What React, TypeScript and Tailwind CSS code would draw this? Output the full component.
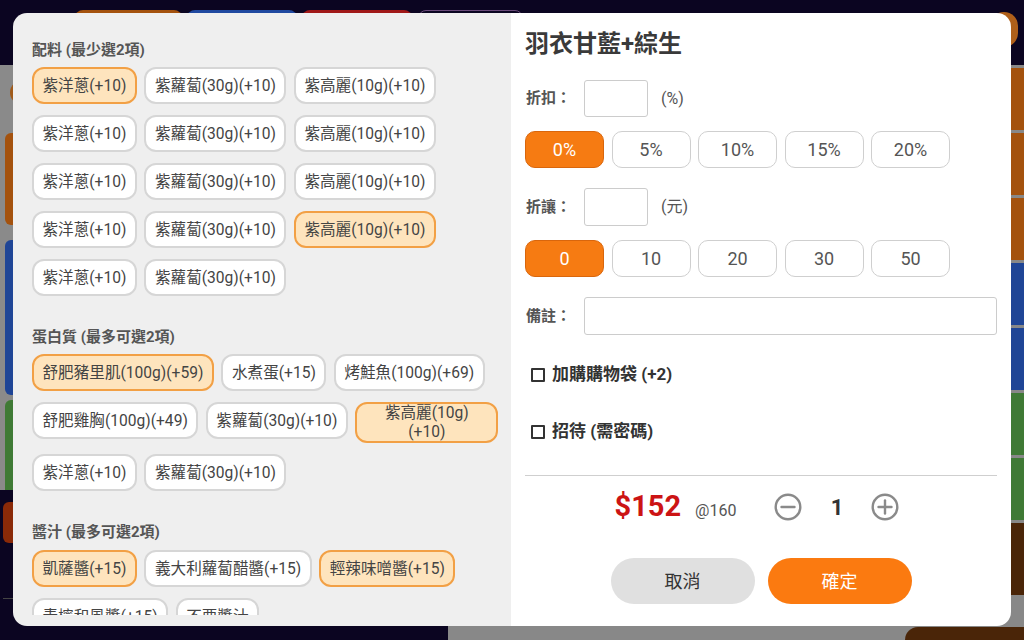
import React from "react";

type ChipProps = { label: React.ReactNode; sel?: boolean };

function Chip({ label, sel }: ChipProps) {
  return (
    <div
      className={
        sel
          ? "h-[37px] px-[8.5px] flex items-center shrink-0 whitespace-nowrap rounded-[12px] border-2 border-[#f2a045] bg-[#fee4bd] text-[15.6px] leading-[20px] text-[#444]"
          : "h-[37px] px-[8.5px] flex items-center shrink-0 whitespace-nowrap rounded-[12px] border-2 border-[#d6d6d6] bg-white text-[15.6px] leading-[20px] text-[#444]"
      }
    >
      {label}
    </div>
  );
}

function Row({ children }: { children: React.ReactNode }) {
  return <div className="flex items-start gap-x-[7.5px]">{children}</div>;
}

function Title({ children }: { children: React.ReactNode }) {
  return <div className="text-[15px] leading-[20px] font-bold text-[#555]">{children}</div>;
}

function Preset({ label, sel }: { label: string; sel?: boolean }) {
  return (
    <div
      className={
        sel
          ? "w-[79px] h-[37px] flex items-center justify-center rounded-[10px] border-[1.5px] border-[#d9660c] bg-[#f67b12] text-white text-[18px]"
          : "w-[79px] h-[37px] flex items-center justify-center rounded-[10px] border-[1.5px] border-[#cfcfcf] bg-white text-[#555] text-[18px]"
      }
    >
      {label}
    </div>
  );
}

function CircleIcon({ plus }: { plus?: boolean }) {
  return (
    <svg width="28" height="28" viewBox="0 0 28 28" fill="none">
      <circle cx="14" cy="14" r="12.3" stroke="#8a8a8a" strokeWidth="2.4" />
      <line x1="7.5" y1="14" x2="20.5" y2="14" stroke="#8a8a8a" strokeWidth="2.4" strokeLinecap="round" />
      {plus && <line x1="14" y1="7.5" x2="14" y2="20.5" stroke="#8a8a8a" strokeWidth="2.4" strokeLinecap="round" />}
    </svg>
  );
}

function Check({ label }: { label: string }) {
  return (
    <div className="h-[24px] flex items-center pl-[6px]">
      <div className="w-[14px] h-[14px] border-2 border-[#333] rounded-[1px]" />
      <div className="ml-[7px] text-[17px] font-bold text-[#333]">{label}</div>
    </div>
  );
}

export default function App() {
  return (
    <div className="relative w-[1024px] h-[640px] overflow-hidden bg-[#0b0521] font-['Roboto','Noto_Sans_CJK_TC',sans-serif]">
      {/* background app */}
      <div className="h-[65px] flex items-start pt-[10px] pl-[75px]">
        <div className="w-[107px] h-[40px] rounded-t-[8px] bg-[#a4520e]" />
        <div className="ml-[5px] w-[110px] h-[40px] rounded-t-[8px] bg-[#2049a0]" />
        <div className="ml-[5px] w-[110px] h-[40px] rounded-t-[8px] bg-[#a01818]" />
        <div className="ml-[6px] w-[105px] h-[40px] rounded-t-[8px] border border-[#6a4a7a]" />
        <div className="ml-auto mt-[2px] mr-[6px] w-[28px] h-[35px] rounded-full bg-[#b0601a]" />
      </div>
      <div className="flex h-[575px]">
        <div className="w-[448px] flex flex-col">
          <div className="h-[425px] bg-[#8a8a8a] flex flex-col pl-[5px] pt-[15px]">
            <div className="ml-[5px] w-[30px] h-[25px] rounded-full bg-[#a05a1a]" />
            <div className="mt-[28px] h-[92px] rounded-[6px] bg-[#a4520e]" />
            <div className="mt-[15px] h-[155px] rounded-[6px] bg-[#1f4596]" />
            <div className="mt-[5px] h-[90px] rounded-t-[6px] bg-[#3f7a35]" />
          </div>
          <div className="flex-1 flex flex-col pl-[3px] pt-[12px]">
            <div className="w-[120px] h-[41px] rounded-[6px] bg-[#8a2a08]" />
            <div className="mt-[55px] h-px bg-[#444]" />
          </div>
        </div>
        <div className="flex-1 bg-[#0b0521] flex flex-col">
          <div className="flex-1" />
          <div className="h-[14px] bg-[#888]" />
        </div>
        <div className="w-[119px] flex flex-col bg-[#888] pt-[3px] gap-[3px]">
          <div className="h-[62px] bg-[#a4520e]" />
          <div className="h-[62px] bg-[#a4520e]" />
          <div className="h-[62px] bg-[#a4520e]" />
          <div className="h-[62px] bg-[#1f4596]" />
          <div className="h-[62px] bg-[#1f4596]" />
          <div className="h-[62px] bg-[#3f7a35]" />
          <div className="h-[62px] bg-[#3f7a35]" />
          <div className="h-[72px] bg-[#4a2508]" />
          <div className="flex-1 flex flex-col justify-end">
            <div className="h-[13px] rounded-tl-[18px] bg-[#4a2508]" />
          </div>
        </div>
      </div>

      {/* modal */}
      <div className="absolute left-[13px] top-[13px] w-[998px] h-[613px] rounded-[14px] overflow-hidden flex">
        {/* left panel */}
        <div className="w-[498px] bg-[#efefef] flex flex-col pb-[11px]">
          <div className="flex-1 overflow-hidden pl-[19px] pr-[9px] pt-[27px]">
            <Title>配料 (最少選2項)</Title>
            <div className="mt-[7px] flex flex-col gap-y-[11px]">
              <Row>
                <Chip label="紫洋蔥(+10)" sel />
                <Chip label="紫蘿蔔(30g)(+10)" />
                <Chip label="紫高麗(10g)(+10)" />
              </Row>
              <Row>
                <Chip label="紫洋蔥(+10)" />
                <Chip label="紫蘿蔔(30g)(+10)" />
                <Chip label="紫高麗(10g)(+10)" />
              </Row>
              <Row>
                <Chip label="紫洋蔥(+10)" />
                <Chip label="紫蘿蔔(30g)(+10)" />
                <Chip label="紫高麗(10g)(+10)" />
              </Row>
              <Row>
                <Chip label="紫洋蔥(+10)" />
                <Chip label="紫蘿蔔(30g)(+10)" />
                <Chip label="紫高麗(10g)(+10)" sel />
              </Row>
              <Row>
                <Chip label="紫洋蔥(+10)" />
                <Chip label="紫蘿蔔(30g)(+10)" />
              </Row>
            </div>

            <div className="mt-[31px]">
              <Title>蛋白質 (最多可選2項)</Title>
            </div>
            <div className="mt-[7px] flex flex-col gap-y-[11px]">
              <Row>
                <Chip label="舒肥豬里肌(100g)(+59)" sel />
                <Chip label="水煮蛋(+15)" />
                <Chip label="烤鮭魚(100g)(+69)" />
              </Row>
              <Row>
                <Chip label="舒肥雞胸(100g)(+49)" />
                <Chip label="紫蘿蔔(30g)(+10)" />
                <div className="w-[143px] h-[41px] flex flex-col items-center justify-center shrink-0 rounded-[12px] border-2 border-[#f2a045] bg-[#fee4bd] text-[15.6px] leading-[19px] text-[#444]">
                  <span>紫高麗(10g)</span>
                  <span>(+10)</span>
                </div>
              </Row>
              <Row>
                <Chip label="紫洋蔥(+10)" />
                <Chip label="紫蘿蔔(30g)(+10)" />
              </Row>
            </div>

            <div className="mt-[31px]">
              <Title>醬汁 (最多可選2項)</Title>
            </div>
            <div className="mt-[8px] flex flex-col gap-y-[11px]">
              <Row>
                <Chip label="凱薩醬(+15)" sel />
                <Chip label="義大利蘿蔔醋醬(+15)" />
                <Chip label="輕辣味噌醬(+15)" sel />
              </Row>
              <Row>
                <Chip label="青檸和風醬(+15)" />
                <Chip label="不要醬汁" />
              </Row>
            </div>
          </div>
        </div>

        {/* right panel */}
        <div className="flex-1 bg-white px-[14px] pt-[15px] flex flex-col">
          <div className="h-[32px] text-[24px] leading-[32px] font-bold text-[#3a3a3a]">羽衣甘藍+綜生</div>

          <div className="mt-[20px] flex items-center">
            <div className="w-[59px] pl-[1px] text-[15px] font-bold text-[#555]">折扣：</div>
            <div className="w-[64px] h-[37px] rounded-[3px] border border-[#ccc]" />
            <div className="ml-[13px] text-[16px] text-[#555]">(%)</div>
          </div>
          <div className="mt-[14px] flex gap-[7.5px]">
            <Preset label="0%" sel />
            <Preset label="5%" />
            <Preset label="10%" />
            <Preset label="15%" />
            <Preset label="20%" />
          </div>

          <div className="mt-[20px] flex items-center">
            <div className="w-[59px] pl-[1px] text-[15px] font-bold text-[#555]">折讓：</div>
            <div className="w-[64px] h-[38px] rounded-[3px] border border-[#ccc]" />
            <div className="ml-[13px] text-[16px] text-[#555]">(元)</div>
          </div>
          <div className="mt-[14px] flex gap-[7.5px]">
            <Preset label="0" sel />
            <Preset label="10" />
            <Preset label="20" />
            <Preset label="30" />
            <Preset label="50" />
          </div>

          <div className="mt-[20px] flex items-center">
            <div className="w-[59px] pl-[1px] text-[15px] font-bold text-[#555]">備註：</div>
            <div className="flex-1 h-[38px] rounded-[3px] border border-[#ccc]" />
          </div>

          <div className="mt-[28px]">
            <Check label="加購購物袋 (+2)" />
          </div>
          <div className="mt-[33px]">
            <Check label="招待 (需密碼)" />
          </div>

          <div className="mt-[31px] h-px bg-[#cfcfcf]" />

          <div className="mt-[16px] h-[30px] flex items-center justify-center pr-[8px]">
            <div className="flex items-baseline">
              <span className="text-[29px] leading-[30px] font-bold text-[#cc1414]">$152</span>
              <span className="ml-[14px] text-[16px] text-[#555]">@160</span>
            </div>
            <div className="ml-[38px] flex items-center">
              <CircleIcon />
            </div>
            <div className="ml-[28px] w-[13px] text-center text-[22px] font-bold text-[#333]">1</div>
            <div className="ml-[28px] flex items-center">
              <CircleIcon plus />
            </div>
          </div>

          <div className="mt-[36px] flex justify-center gap-[13px]">
            <div className="w-[144px] h-[46px] rounded-full bg-[#e0e0e0] flex items-center justify-center text-[18px] text-[#333]">取消</div>
            <div className="w-[144px] h-[46px] rounded-full bg-[#fb7a10] flex items-center justify-center text-[18px] text-white">確定</div>
          </div>
        </div>
      </div>
    </div>
  );
}
